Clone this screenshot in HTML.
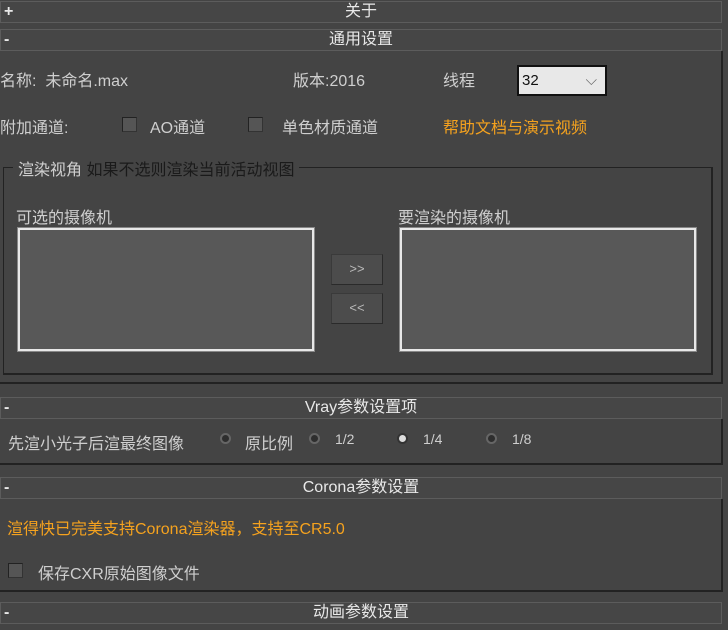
<!DOCTYPE html>
<html><head><meta charset="utf-8"><style>
body{margin:0;width:728px;height:630px;background:#444;overflow:hidden;position:relative;font-family:"Liberation Sans","Noto Sans CJK SC",sans-serif;font-size:16px;color:#cfcfcf}
.a{position:absolute;white-space:nowrap}
.hd{position:absolute;left:0;width:720px;height:20px;border:1px solid #5c5c5c;background:#464646;text-align:center;line-height:20px;color:#e8e8e8}
.hd span{position:absolute;left:3px;top:0;font-weight:bold}
.pn{position:absolute;left:0;width:721px;border-right:2px solid #222;border-bottom:2px solid #222}
.cb{position:absolute;width:13px;height:13px;background:#555;border:1px solid #222;border-right-color:#333;border-bottom-color:#333}
.or{color:#f5a21e}
.lb{position:absolute;background:#585858;border:2px solid #e8e8e8;box-shadow:0 0 0 1px #888}
.bt{position:absolute;width:50px;height:29px;background:#4c4c4c;border:1px solid #3a3a3a;border-right-color:#2a2a2a;border-bottom-color:#2a2a2a;text-align:center;line-height:28px;font-size:13px;color:#bbb}
.rd{position:absolute;width:9px;height:11px;border-radius:50%;background:#2e2e2e;border:2px solid #666;box-sizing:border-box;width:11px}
</style></head><body>
<div class="hd" style="top:1px"><span>+</span>关于</div>
<div class="hd" style="top:29px"><span>-</span>通用设置</div>
<div class="pn" style="top:51px;height:331px"></div>
<div class="a" style="left:0;top:67px">名称:&nbsp; 未命名.max</div>
<div class="a" style="left:293px;top:67px">版本:2016</div>
<div class="a" style="left:443px;top:67px">线程</div>
<div class="a" style="left:517px;top:65px;width:86px;height:27px;background:#e8e8e8;border:2px solid #111;color:#111;font-size:15px;line-height:28px"><span style="padding-left:3px">32</span><span style="position:absolute;right:8px;top:0;color:#666">⌵</span></div>
<div class="a" style="left:0;top:114px">附加通道:</div>
<div class="cb" style="left:122px;top:117px"></div>
<div class="a" style="left:150px;top:114px">AO通道</div>
<div class="cb" style="left:248px;top:117px"></div>
<div class="a" style="left:282px;top:114px">单色材质通道</div>
<div class="a or" style="left:443px;top:114px">帮助文档与演示视频</div>
<div class="a" style="left:3px;top:167px;width:707px;height:205px;border:1px solid #222;border-right:2px solid #222;border-bottom:2px solid #222"></div>
<div class="a" style="left:13px;top:156px;background:#444;padding:0 5px">渲染视角 <span style="color:#1a1a1a">如果不选则渲染当前活动视图</span></div>
<div class="a" style="left:16px;top:204px">可选的摄像机</div>
<div class="a" style="left:398px;top:204px">要渲染的摄像机</div>
<div class="lb" style="left:18px;top:228px;width:292px;height:119px"></div>
<div class="lb" style="left:400px;top:228px;width:292px;height:119px"></div>
<div class="bt" style="left:331px;top:254px">&gt;&gt;</div>
<div class="bt" style="left:331px;top:293px">&lt;&lt;</div>
<div class="hd" style="top:397px"><span>-</span>Vray参数设置项</div>
<div class="pn" style="top:419px;height:44px"></div>
<div class="a" style="left:8px;top:430px">先渲小光子后渲最终图像</div>
<div class="rd" style="left:220px;top:433px"></div>
<div class="a" style="left:245px;top:430px">原比例</div>
<div class="rd" style="left:309px;top:433px"></div>
<div class="a" style="left:335px;top:431px;font-size:14px">1/2</div>
<div class="rd" style="left:397px;top:433px;background:#ddd;border-color:#333"></div>
<div class="a" style="left:423px;top:431px;font-size:14px">1/4</div>
<div class="rd" style="left:486px;top:433px"></div>
<div class="a" style="left:512px;top:431px;font-size:14px">1/8</div>
<div class="hd" style="top:477px"><span>-</span>Corona参数设置</div>
<div class="pn" style="top:499px;height:91px"></div>
<div class="a or" style="left:7px;top:515px">渲得快已完美支持Corona渲染器，支持至CR5.0</div>
<div class="cb" style="left:8px;top:563px"></div>
<div class="a" style="left:38px;top:560px">保存CXR原始图像文件</div>
<div class="hd" style="top:602px"><span>-</span>动画参数设置</div>
</body></html>
